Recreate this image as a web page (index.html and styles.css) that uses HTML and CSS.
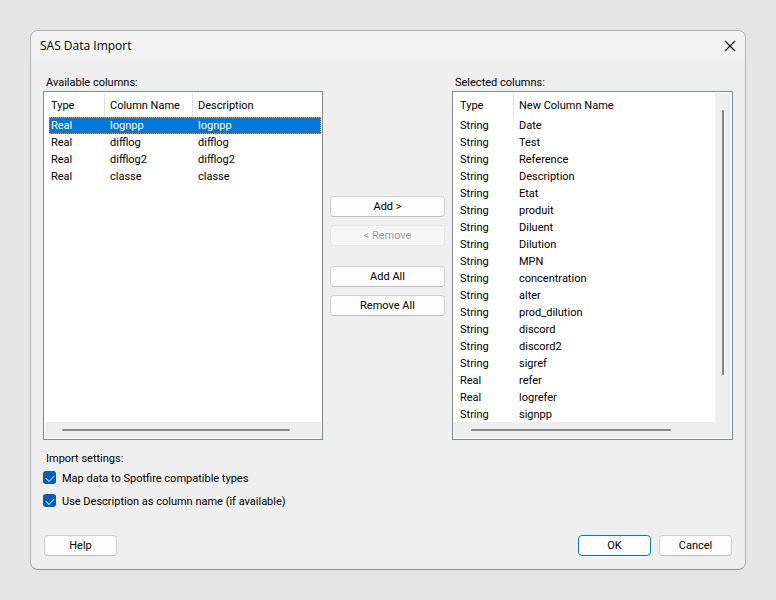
FILE: index.html
```html
<!DOCTYPE html>
<html lang="en">
    <head>
        <meta charset="utf-8"/>
        <title>SAS Data Import</title>
        <link rel="stylesheet" href="styles.css">
    </head>
    <body>
        <main class="dialog">
            <header class="title-bar">
                <h1>SAS Data Import</h1>
                <button class="close-button" aria-label="Close">
                    <svg width="12" height="12" viewBox="0 0 12 12"><path d="M1 1 L11 11 M11 1 L1 11"/></svg>
                </button>
            </header>

            <form class="content">
                <div class="columns">
                    <section>
                        <h2>Available columns:</h2>
                        <div class="list-box">
                            <div class="list-view">
                                <table>
                                    <thead>
                                        <tr><th class="type">Type</th><th class="name">Column Name</th><th>Description</th></tr>
                                    </thead>
                                    <tbody>
                                        <tr class="selected"><td>Real</td><td>lognpp</td><td>lognpp</td></tr>
                                        <tr><td>Real</td><td>difflog</td><td>difflog</td></tr>
                                        <tr><td>Real</td><td>difflog2</td><td>difflog2</td></tr>
                                        <tr><td>Real</td><td>classe</td><td>classe</td></tr>
                                    </tbody>
                                </table>
                            </div>
                            <div class="scroll-x"><div class="thumb wide"></div></div>
                        </div>
                    </section>

                    <div class="transfer">
                        <button type="button">Add &gt;</button>
                        <button type="button" disabled>&lt; Remove</button>
                        <button type="button" class="group-start">Add All</button>
                        <button type="button">Remove All</button>
                    </div>

                    <section>
                        <h2>Selected columns:</h2>
                        <div class="list-box with-scroll-y">
                            <div class="list-view">
                                <table>
                                    <thead>
                                        <tr><th class="type">Type</th><th>New Column Name</th></tr>
                                    </thead>
                                    <tbody>
                                        <tr><td>String</td><td>Date</td></tr>
                                        <tr><td>String</td><td>Test</td></tr>
                                        <tr><td>String</td><td>Reference</td></tr>
                                        <tr><td>String</td><td>Description</td></tr>
                                        <tr><td>String</td><td>Etat</td></tr>
                                        <tr><td>String</td><td>produit</td></tr>
                                        <tr><td>String</td><td>Diluent</td></tr>
                                        <tr><td>String</td><td>Dilution</td></tr>
                                        <tr><td>String</td><td>MPN</td></tr>
                                        <tr><td>String</td><td>concentration</td></tr>
                                        <tr><td>String</td><td>alter</td></tr>
                                        <tr><td>String</td><td>prod_dilution</td></tr>
                                        <tr><td>String</td><td>discord</td></tr>
                                        <tr><td>String</td><td>discord2</td></tr>
                                        <tr><td>String</td><td>sigref</td></tr>
                                        <tr><td>Real</td><td>refer</td></tr>
                                        <tr><td>Real</td><td>logrefer</td></tr>
                                        <tr><td>String</td><td>signpp</td></tr>
                                    </tbody>
                                </table>
                            </div>
                            <div class="scroll-y"><div class="thumb"></div></div>
                            <div class="scroll-x"><div class="thumb"></div></div>
                        </div>
                    </section>
                </div>

                <fieldset class="settings">
                    <legend>Import settings:</legend>
                    <label><input type="checkbox" checked> Map data to Spotfire compatible types</label>
                    <label><input type="checkbox" checked> Use Description as column name (if available)</label>
                </fieldset>

                <footer class="actions">
                    <button type="button" class="help">Help</button>
                    <button type="submit" class="default">OK</button>
                    <button type="button">Cancel</button>
                </footer>
            </form>
        </main>
    </body>
</html>
```

FILE: styles.css
```css
* {
    box-sizing: border-box;
}

body {
    margin: 0;
    padding: 30px;
    background: #e4e4e4;
    font-family: Roboto, "Liberation Sans", Arial, sans-serif;
    font-size: 11px;
    line-height: 16px;
    color: #000;
}

.dialog {
    background: #efefef;
    border: 1px solid #b0b0b0;
    border-bottom-color: #8e8e8e;
    border-radius: 8px;
    overflow: hidden;
}

.title-bar {
    display: flex;
    align-items: center;
    justify-content: space-between;
    height: 30px;
    padding: 0 9px;
    background: #f3f3f3;
}

h1 {
    margin: 0;
    font-family: "Open Sans", "Noto Sans", sans-serif;
    font-size: 12px;
    font-weight: normal;
}

h2 {
    margin: 0;
    padding: 1px 0 0 3px;
    font-size: 11px;
    font-weight: normal;
}

button {
    height: 21px;
    padding: 1px 0 0;
    background: #fdfdfd;
    border: 1px solid #d0d0d0;
    border-bottom-color: #bcbcbc;
    border-radius: 4px;
    font: inherit;
    color: #000;
}

button:disabled {
    background: #f7f7f7;
    border-color: #e5e5e5;
    color: #a0a0a0;
}

button.default {
    border-color: #0078d4;
}

.close-button {
    width: 12px;
    height: 12px;
    padding: 0;
    background: none;
    border: none;
}

.close-button svg {
    display: block;
    stroke: #111;
    stroke-width: 1.2;
}

.content {
    padding: 13px 12px;
}

/* the right list gets the odd pixel */
.columns {
    display: grid;
    grid-template-columns: 280fr 115px 281fr;
    gap: 7px;
}

.list-box {
    display: grid;
    grid-template-columns: 1fr;
    grid-template-rows: 1fr 16px;
    height: 349px;
    padding: 1px;
    background: #fff;
    border: 1px solid #828790;
}

.with-scroll-y {
    grid-template-columns: 1fr 16px;
}

.list-view {
    overflow: hidden;
    padding-left: 4px;
}

table {
    width: 100%;
    table-layout: fixed;
    border-spacing: 0;
}

th, td {
    padding: 1px 0 0 5px;
    text-align: left;
    font-weight: normal;
    white-space: nowrap;
}

th {
    height: 24px;
    border-right: 1px solid #e0e0e0;
}

td {
    height: 17px;
}

th:last-child {
    border-right: none;
}

th:first-child, td:first-child {
    padding-left: 2px;
}

.type {
    width: 56px;
}

.name {
    width: 88px;
}

.selected {
    background: #0078d7;
    color: #fff;
    outline: 1px dotted #ff8728;
    outline-offset: -1px;
}

.scroll-x, .scroll-y {
    background: #efefef;
}

.scroll-x {
    grid-column: 1 / -1;
    padding: 7px 0 0 17px;
}

.scroll-y {
    padding: 17px 0 0 7px;
}

.thumb {
    background: #868686;
    border-radius: 1px;
}

.scroll-x .thumb {
    width: 77%;
    height: 2px;
}

.scroll-x .wide {
    width: 88%;
}

.scroll-y .thumb {
    width: 2px;
    height: 85%;
}

.transfer {
    display: flex;
    flex-direction: column;
    gap: 8px;
    padding-top: 122px;
}

.group-start {
    margin-top: 12px;
}

.settings {
    margin: 0;
    padding: 0;
    border: none;
}

.settings legend {
    padding: 11px 0 4px 3px;
}

.settings label {
    display: flex;
    align-items: flex-start;
    gap: 6px;
    margin-bottom: 7px;
}

input[type="checkbox"] {
    appearance: none;
    width: 13px;
    height: 13px;
    margin: 0;
    padding: 4px 3px;
    background: #005fb8;
    border-radius: 3px;
}

input[type="checkbox"]:checked::before {
    content: "";
    display: block;
    width: 7px;
    height: 4px;
    border-left: 1px solid #b8d4ee;
    border-bottom: 1px solid #b8d4ee;
    transform: rotate(-45deg);
}

.actions {
    display: flex;
    gap: 8px;
    padding: 18px 1px 0;
}

.actions button {
    width: 73px;
}

.actions .help {
    margin-right: auto;
}
```
